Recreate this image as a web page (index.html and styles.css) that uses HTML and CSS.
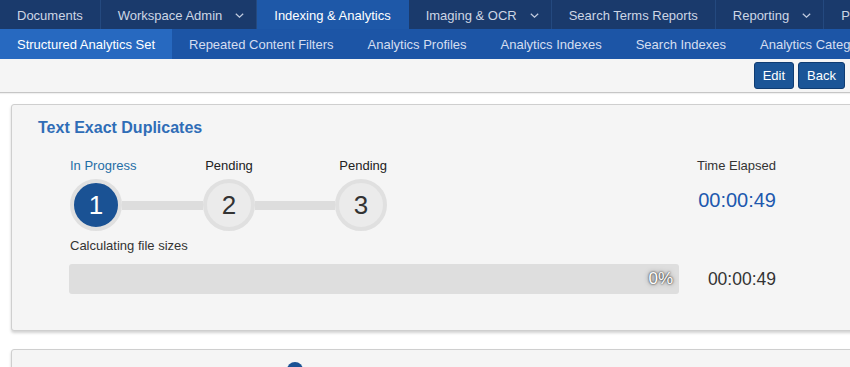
FILE: index.html
```html
<!DOCTYPE html>
<html lang="en">
<head>
    <meta charset="UTF-8">
    <meta name="viewport" content="width=device-width, initial-scale=1.0">
    <title>Structured Analytics Set</title>
    <link rel="stylesheet" href="styles.css">
</head>
<body>

<!-- Główne menu -->
<div class="top-nav">
    <a href="#">Documents</a>
    <a href="#">Workspace Admin <svg class="chevron" viewBox="0 0 9 5"><polyline points="0.8,0.8 4.5,4.2 8.2,0.8"/></svg></a>
    <a href="#" class="active">Indexing &amp; Analytics</a>
    <a href="#">Imaging &amp; OCR <svg class="chevron" viewBox="0 0 9 5"><polyline points="0.8,0.8 4.5,4.2 8.2,0.8"/></svg></a>
    <a href="#">Search Terms Reports</a>
    <a href="#">Reporting <svg class="chevron" viewBox="0 0 9 5"><polyline points="0.8,0.8 4.5,4.2 8.2,0.8"/></svg></a>
    <a href="#">Processing</a>
</div>

<!-- Podmenu -->
<div class="sub-nav">
    <a href="#" class="active">Structured Analytics Set</a>
    <a href="#">Repeated Content Filters</a>
    <a href="#">Analytics Profiles</a>
    <a href="#">Analytics Indexes</a>
    <a href="#">Search Indexes</a>
    <a href="#">Analytics Categorization Sets</a>
</div>

<div class="toolbar">
    <button type="button">Edit</button>
    <button type="button">Back</button>
</div>

<div class="content">
    <!-- Postęp zadania -->
    <div class="job-panel">
        <h2 class="job-title">Text Exact Duplicates</h2>
        <div class="job-body">
            <div class="job-top">
                <div class="steps">
                    <div class="step step-first current">
                        <div class="step-label">In Progress</div>
                        <div class="step-circle">1</div>
                    </div>
                    <div class="step-line"></div>
                    <div class="step">
                        <div class="step-label">Pending</div>
                        <div class="step-circle">2</div>
                    </div>
                    <div class="step-line step-line-short"></div>
                    <div class="step step-last">
                        <div class="step-label">Pending</div>
                        <div class="step-circle">3</div>
                    </div>
                </div>
                <div class="elapsed">
                    <div class="elapsed-label">Time Elapsed</div>
                    <div class="elapsed-total">00:00:49</div>
                </div>
            </div>
            <div class="step-status">Calculating file sizes</div>
            <div class="job-progress">
                <div class="progress-bar"><span>0%</span></div>
                <div class="progress-time">00:00:49</div>
            </div>
        </div>
    </div>

    <div class="job-panel next-panel">
        <span class="info-dot"></span>
    </div>
</div>

</body>
</html>
```

FILE: styles.css
```css
body {
    font-family: "Liberation Sans", Arial, sans-serif;
    font-size: 13px;
    color: #333;
    margin: 0;
    background-color: white;
    overflow: hidden;
}

.top-nav {
    display: flex;
    height: 29px;
    background-color: #1a3a6c;
    white-space: nowrap;
    overflow: hidden;
}

.top-nav a {
    display: flex;
    align-items: center;
    flex-shrink: 0;
    padding: 1px 17px 0;
    color: #cdd6e5;
    text-decoration: none;
    border-right: 1px solid #24497f;
}

.top-nav a.active {
    background-color: #1e58a8;
    color: white;
    border-right-color: #1e58a8;
}

.top-nav a:has(.chevron) {
    padding-right: 12px;
}

.chevron {
    width: 9px;
    height: 5px;
    margin-left: 13px;
    fill: none;
    stroke: #c3cde0;
    stroke-width: 1.2;
}

.sub-nav {
    display: flex;
    height: 30px;
    background-color: #1c55a6;
    white-space: nowrap;
    overflow: hidden;
}

.sub-nav a {
    display: flex;
    align-items: center;
    flex-shrink: 0;
    padding: 0 17px;
    color: #d5def0;
    text-decoration: none;
}

.sub-nav a.active {
    background-color: #2769c0;
    color: white;
}

.toolbar {
    display: flex;
    justify-content: flex-end;
    gap: 4px;
    height: 34px;
    padding: 3px 5px 0 0;
    box-sizing: border-box;
    background-color: #f5f5f5;
    border-bottom: 1px solid #c6c6c6;
    box-shadow: 0 1px 1px rgba(0, 0, 0, 0.06);
}

.toolbar button {
    height: 27px;
    padding: 0 8px;
    font-family: inherit;
    font-size: 13px;
    color: white;
    background-color: #1b5597;
    border: 1px solid #0f3c72;
    border-radius: 3px;
    cursor: pointer;
}

.content {
    padding: 11px 0 0 11px;
}

.job-panel {
    width: 880px;
    padding: 13px 0 36px 26px;
    box-sizing: border-box;
    background-color: #f5f5f5;
    border: 1px solid #cfcfcf;
    border-radius: 3px;
    box-shadow: 0 2px 3px rgba(0, 0, 0, 0.18);
}

.job-title {
    margin: 0;
    font-size: 16px;
    line-height: 20px;
    color: #2f6db7;
}

.job-body {
    width: 706px;
    margin: 20px 0 0 32px;
}

.job-top {
    display: flex;
    justify-content: space-between;
}

.steps {
    display: flex;
    align-items: flex-end;
}

.step {
    display: flex;
    flex-direction: column;
    align-items: center;
    width: 52px;
}

.step-first {
    align-items: flex-start;
}

.step-last {
    align-items: flex-end;
}

.step-label {
    line-height: 16px;
    margin-bottom: 5px;
    color: #222;
    white-space: nowrap;
}

.step-circle {
    display: flex;
    align-items: center;
    justify-content: center;
    width: 52px;
    height: 52px;
    box-sizing: border-box;
    border: 4px solid #e0e0e0;
    border-radius: 50%;
    background-color: #ebebeb;
    font-size: 26px;
    color: #333;
}

.current .step-label {
    color: #1f6ea6;
}

.current .step-circle {
    background-color: #1a5294;
    color: white;
}

.step-line {
    width: 81px;
    height: 9px;
    margin-bottom: 21px;
    background-color: #dddddd;
}

.step-line-short {
    width: 80px;
}

.elapsed {
    text-align: right;
}

.elapsed-label {
    line-height: 16px;
    color: #333;
}

.elapsed-total {
    margin-top: 14px;
    font-size: 20px;
    line-height: 24px;
    color: #2058ae;
}

.step-status {
    margin-top: 7px;
    line-height: 16px;
    color: #333;
}

.job-progress {
    display: flex;
    align-items: center;
    margin-top: 10px;
}

.progress-bar {
    display: flex;
    align-items: center;
    justify-content: flex-end;
    width: 610px;
    height: 30px;
    margin-left: -1px;
    padding-right: 6px;
    box-sizing: border-box;
    background-color: #dedede;
    border-radius: 3px;
}

.progress-bar span {
    font-size: 17px;
    color: white;
    text-shadow: 0 0 2px rgba(0, 0, 0, 0.9), 0 0 5px rgba(0, 0, 0, 0.5);
}

.progress-time {
    flex-grow: 1;
    text-align: right;
    font-size: 17.5px;
    line-height: 21px;
    color: #333;
}

.next-panel {
    margin-top: 18px;
    height: 60px;
    padding: 12px 0 0 275px;
}

.info-dot {
    display: block;
    width: 16px;
    height: 16px;
    border-radius: 50%;
    background-color: #1a5294;
}
```
